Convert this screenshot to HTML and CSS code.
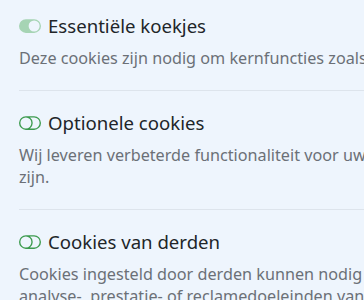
FILE: index.html
```html
<!DOCTYPE html>
<html lang="nl">
<head>
<meta charset="utf-8">
<link rel="stylesheet" href="styles.css">
</head>
<body>
<div class="panel">
  <section class="item">
    <h3 class="title">
      <svg class="toggle on" viewBox="0 0 16 16" width="22" height="22"><path d="M5 3a5 5 0 0 0 0 10h6a5 5 0 0 0 0-10zm6 9a4 4 0 1 1 0-8 4 4 0 0 1 0 8"/></svg>
      Essentiële koekjes
    </h3>
    <p class="desc">Deze cookies zijn nodig om kernfuncties zoals beveiliging mogelijk te maken.</p>
  </section>
  <section class="item">
    <h3 class="title">
      <svg class="toggle off" viewBox="0 0 16 16" width="22" height="22"><path d="M11 4a4 4 0 0 1 0 8H8a5 5 0 0 0 2-4 5 5 0 0 0-2-4zm-6 8a4 4 0 1 1 0-8 4 4 0 0 1 0 8M0 8a5 5 0 0 0 5 5h6a5 5 0 0 0 0-10H5a5 5 0 0 0-5 5"/></svg>
      Optionele cookies
    </h3>
    <p class="desc">Wij leveren verbeterde functionaliteit voor uw bezoek wanneer deze cookies ingeschakeld zijn.</p>
  </section>
  <section class="item">
    <h3 class="title">
      <svg class="toggle off" viewBox="0 0 16 16" width="22" height="22"><path d="M11 4a4 4 0 0 1 0 8H8a5 5 0 0 0 2-4 5 5 0 0 0-2-4zm-6 8a4 4 0 1 1 0-8 4 4 0 0 1 0 8M0 8a5 5 0 0 0 5 5h6a5 5 0 0 0 0-10H5a5 5 0 0 0-5 5"/></svg>
      Cookies van derden
    </h3>
    <p class="desc">Cookies ingesteld door derden kunnen nodig zijn voor het delen van content of voor analyse-, prestatie- of reclamedoeleinden van onze partners.</p>
  </section>
</div>
</body>
</html>
```

FILE: styles.css
```css
html, body {
  margin: 0;
  padding: 0;
  background: #eef5fd;
  overflow: hidden;
}
body {
  font-family: "Noto Sans", "Open Sans", sans-serif;
  color: #212529;
}
.panel {
  width: 696px;
  padding: 0 0 0 19px;
}
.item {
  padding: 17px 0 21px;
  border-bottom: 1px solid #dde4ec;
}
.item:first-child {
  padding-top: 11px;
}
.title {
  display: flex;
  align-items: center;
  gap: 7px;
  margin: 0 0 6px;
  font-size: 18.6px;
  font-weight: 400;
  line-height: 30px;
}
.toggle {
  flex: none;
}
.toggle.on {
  fill: #a6d4b4;
}
.toggle.off {
  fill: #3d9b4f;
}
.desc {
  margin: 0;
  font-size: 16.2px;
  line-height: 22px;
  color: #6b7077;
}
```
